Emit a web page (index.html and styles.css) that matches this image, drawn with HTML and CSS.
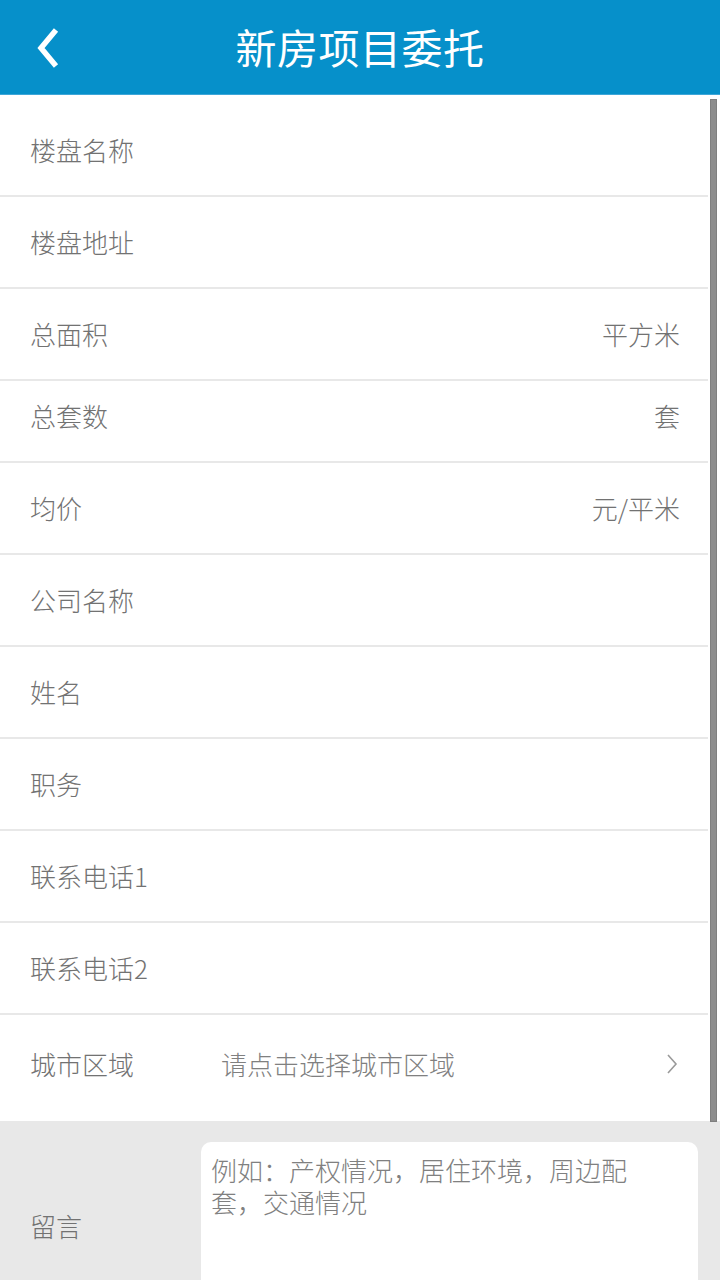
FILE: index.html
```html
<!DOCTYPE html>
<html lang="zh-CN">
<head>
<meta charset="utf-8">
<title>新房项目委托</title>
<link rel="stylesheet" href="styles.css">
</head>
<body>
<div class="page">
  <header class="topbar">
    <span class="back">
      <svg width="30" height="44" viewBox="0 0 30 44"><polyline points="23,4 8,22 23,40" fill="none" stroke="#fff" stroke-width="5.5" stroke-linejoin="miter"/></svg>
    </span>
    <h1 class="title">新房项目委托</h1>
  </header>
  <main class="form">
    <div class="row first"><span class="label">楼盘名称</span></div>
    <div class="row"><span class="label">楼盘地址</span></div>
    <div class="row"><span class="label">总面积</span><span class="unit">平方米</span></div>
    <div class="row short"><span class="label">总套数</span><span class="unit">套</span></div>
    <div class="row"><span class="label">均价</span><span class="unit">元/平米</span></div>
    <div class="row"><span class="label">公司名称</span></div>
    <div class="row"><span class="label">姓名</span></div>
    <div class="row"><span class="label">职务</span></div>
    <div class="row"><span class="label">联系电话1</span></div>
    <div class="row"><span class="label">联系电话2</span></div>
    <div class="row city">
      <span class="label city-label">城市区域</span>
      <span class="picker">请点击选择城市区域</span>
      <svg class="arrow" width="12" height="22" viewBox="0 0 12 22"><polyline points="2,2 10,11 2,20" fill="none" stroke="#9a9a9a" stroke-width="1.6"/></svg>
    </div>
    <section class="memo">
      <span class="label memo-label">留言</span>
      <div class="memo-box"><p class="memo-text">例如：产权情况，居住环境，周边配套，交通情况</p></div>
    </section>
  </main>
  <div class="scrollbar"></div>
</div>
</body>
</html>
```
FILE: styles.css
```css
* { box-sizing: border-box; }
html, body { margin: 0; padding: 0; }
body {
  width: 720px;
  height: 1280px;
  overflow: hidden;
  background: #fff;
  font-family: "Noto Sans CJK SC", "Noto Sans", sans-serif;
}
.page { position: relative; width: 720px; height: 1280px; overflow: hidden; }
.topbar {
  height: 95px;
  background: #0690ca;
  border-bottom: 1px solid #3ea6d8;
  display: flex;
  align-items: center;
  justify-content: center;
  position: relative;
}
.back {
  position: absolute;
  left: 33px;
  top: 26px;
  display: block;
  width: 30px;
  height: 44px;
}
.back svg { display: block; }
.title {
  margin: 0;
  color: #fff;
  font-size: 41px;
  font-weight: 400;
  letter-spacing: 0.5px;
  line-height: 1;
  margin-top: -2px;
}
.form { display: flex; flex-direction: column; }
.row {
  height: 92px;
  margin-right: 12px;
  border-bottom: 2px solid #e8e8e8;
  display: flex;
  align-items: center;
  padding: 0 28px 0 30px;
}
.row.first { height: 102px; padding-top: 10px; }
.row.short { height: 82px; padding-bottom: 10px; }
.label { color: #727272; font-size: 26px; line-height: 1; font-weight: 300; }
.unit { margin-left: auto; color: #727272; font-size: 26px; line-height: 1; font-weight: 300; }
.row.city { height: 106px; border-bottom: none; padding-bottom: 8px; }
.city-label { width: 191px; flex: none; }
.picker { color: #808080; font-size: 26px; line-height: 1; font-weight: 300; }
.arrow { margin-left: auto; margin-right: 2px; }
.memo {
  background: #e8e8e8;
  display: flex;
  align-items: center;
  padding: 21px 22px 0 30px;
}
.memo-label { width: 171px; flex: none; }
.memo-box {
  width: 497px;
  height: 168px;
  background: #fff;
  border-radius: 10px;
  padding: 12px 10px 0 10px;
}
.memo-text {
  margin: 0;
  width: 440px;
  color: #808080;
  font-size: 26px;
  line-height: 32px;
  font-weight: 300;
}
.scrollbar {
  position: absolute;
  left: 710px;
  top: 99px;
  width: 7px;
  height: 1023px;
  background: #8d8d8d;
  border: 1px solid #7f7f7f;
}
```
